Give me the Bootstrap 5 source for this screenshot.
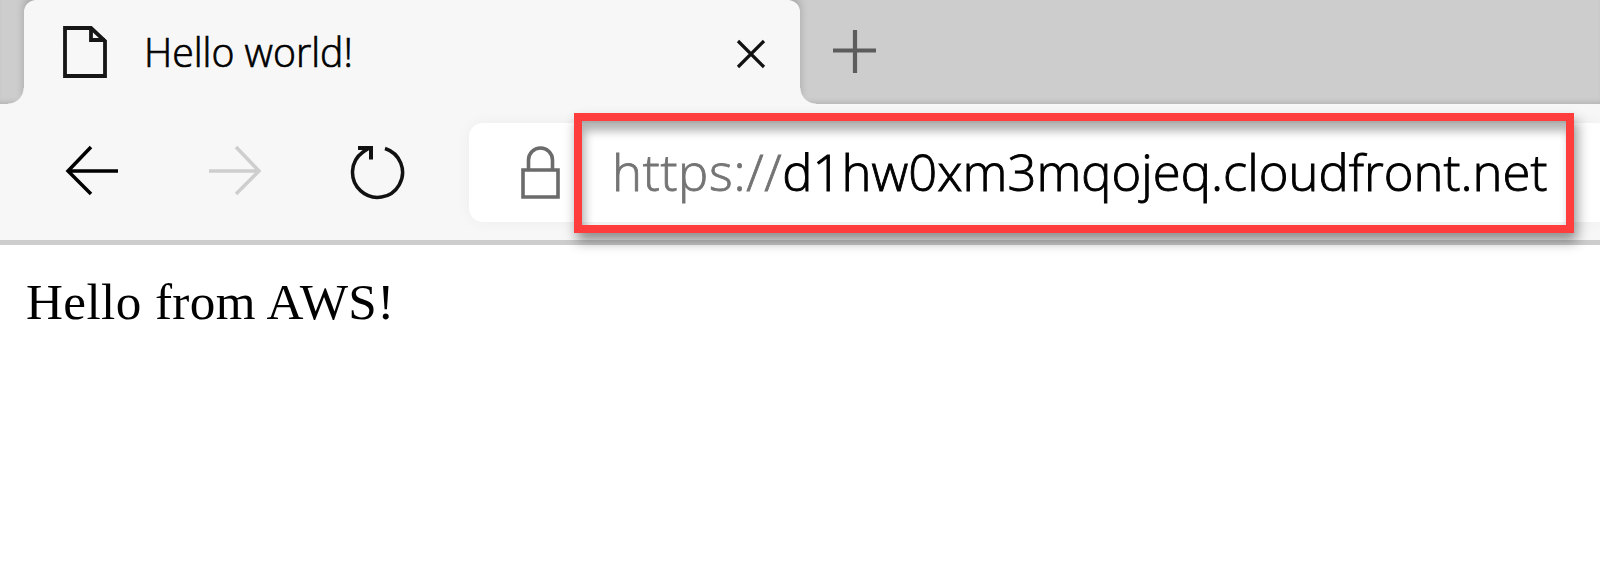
<!DOCTYPE html>
<html lang="en">
<head>
<meta charset="utf-8">
<meta name="viewport" content="width=device-width, initial-scale=1">
<title>Hello world!</title>
<link href="https://cdn.jsdelivr.net/npm/bootstrap@5.3.0/dist/css/bootstrap.min.css" rel="stylesheet">
<style>
  body { font-family: "Open Sans", "Noto Sans", sans-serif; color: #000; background: #fff; }
  .tab-strip { height: 104px; padding-left: 24px; background: #cdcdcd; box-shadow: inset 0 -5px 5px -3px #b4b4b4; }
  .browser-tab { width: 776px; background: #f7f7f7; border-radius: 12px 12px 0 0; padding: 0 34px 0 38px; box-shadow: 0 -5px 8px rgba(0,0,0,.2); }
  .browser-tab::before, .browser-tab::after { content: ""; position: absolute; bottom: 0; width: 16px; height: 16px; }
  .browser-tab::before { right: 100%; background: radial-gradient(circle at 0 0, transparent 15px, #f7f7f7 16px); }
  .browser-tab::after { left: 100%; background: radial-gradient(circle at 100% 0, transparent 15px, #f7f7f7 16px); }
  .tab-title { font-size: 40px; font-weight: 300; -webkit-text-stroke: .7px #000; line-height: 56px; margin-left: 36px; transform: scaleX(.98); transform-origin: left; }
  .new-tab { margin-left: 33px; }
  .toolbar { height: 141px; padding-left: 64px; background: #f7f7f7; border-bottom: 5px solid #cdcdcd; z-index: 1; }
  .nav-icon { margin: 0 87px 3px 0; }
  .reload-icon { margin-right: 63px; }
  .address { height: 99px; background: #fff; border-radius: 14px 0 0 14px; padding-left: 51px; box-shadow: 0 0 16px rgba(0,0,0,.045); }
  .url { font-size: 50px; font-weight: 300; -webkit-text-stroke: .9px currentColor; line-height: 70px; margin-left: 51px; transform: scaleX(1.016); transform-origin: left; }
  .url span { color: #747474; letter-spacing: .7px; -webkit-text-stroke: .8px #747474; }
  .marker { left: 105px; top: -10px; width: 1000px; height: 120px; border: 8px solid #ff3d3d; box-shadow: 3px 8px 12px rgba(0,0,0,.43), inset 3px 10px 10px rgba(0,0,0,.3); }
  .page-body { font-family: "Liberation Serif", serif; font-size: 51.2px; letter-spacing: .4px; line-height: 58px; padding: 28px 26px; }
</style>
</head>
<body class="overflow-hidden">
<header>
  <div class="tab-strip d-flex">
    <div class="browser-tab position-relative d-flex align-items-center flex-shrink-0">
      <svg width="46" height="54" viewBox="0 0 46 54" fill="none" stroke="#161616" stroke-width="3.800"><path d="M3 3H29L43 16V51H3Z"/><path d="M29 3V15H43" /></svg>
      <div class="tab-title text-nowrap">Hello world!</div>
      <svg class="ms-auto mt-1" width="30" height="30" viewBox="0 0 30 30" fill="none" stroke="#111" stroke-width="3.200"><path d="M2 2 28 28M28 2 2 28"/></svg>
    </div>
    <svg class="new-tab align-self-center" width="44" height="44" viewBox="0 0 44 44" fill="none" stroke="#5c5c5c" stroke-width="4.200"><path d="M22 0V43M0 20.500H43"/></svg>
  </div>
  <nav class="toolbar position-relative d-flex align-items-center">
    <svg class="nav-icon flex-shrink-0" width="56" height="54" viewBox="0 0 56 54" fill="none" stroke="#000" stroke-width="3.500"><path d="M27 3 4 27 27 50M4 27H54"/></svg>
    <svg class="nav-icon flex-shrink-0" width="56" height="54" viewBox="0 0 56 54" fill="none" stroke="#cecece" stroke-width="3.500"><path d="M29 3 52 27 29 50M52 27H2"/></svg>
    <svg class="reload-icon flex-shrink-0" width="56" height="56" viewBox="0 0 56 56" fill="none" stroke="#111" stroke-width="3.500"><path d="M35 4.500A25 25 0 1 1 13 8L19 4"/><path d="M8 4H21V15.500" stroke-width="4"/></svg>
    <div class="address position-relative flex-grow-1 d-flex align-items-center">
      <svg class="flex-shrink-0" width="41" height="55" viewBox="0 0 41 55" fill="none" stroke="#6b6b6b" stroke-width="3.600"><path d="M3 25H38V52H3ZM8.500 25V15a12 12 0 0 1 24 0V25"/></svg>
      <div class="url text-nowrap"><span>https://</span>d1hw0xm3mqojeq.cloudfront.net</div>
      <div class="marker position-absolute"></div>
    </div>
  </nav>
</header>
<main class="page-body">Hello from AWS!</main>
<script src="https://cdn.jsdelivr.net/npm/bootstrap@5.3.0/dist/js/bootstrap.bundle.min.js"></script>
</body>
</html>
